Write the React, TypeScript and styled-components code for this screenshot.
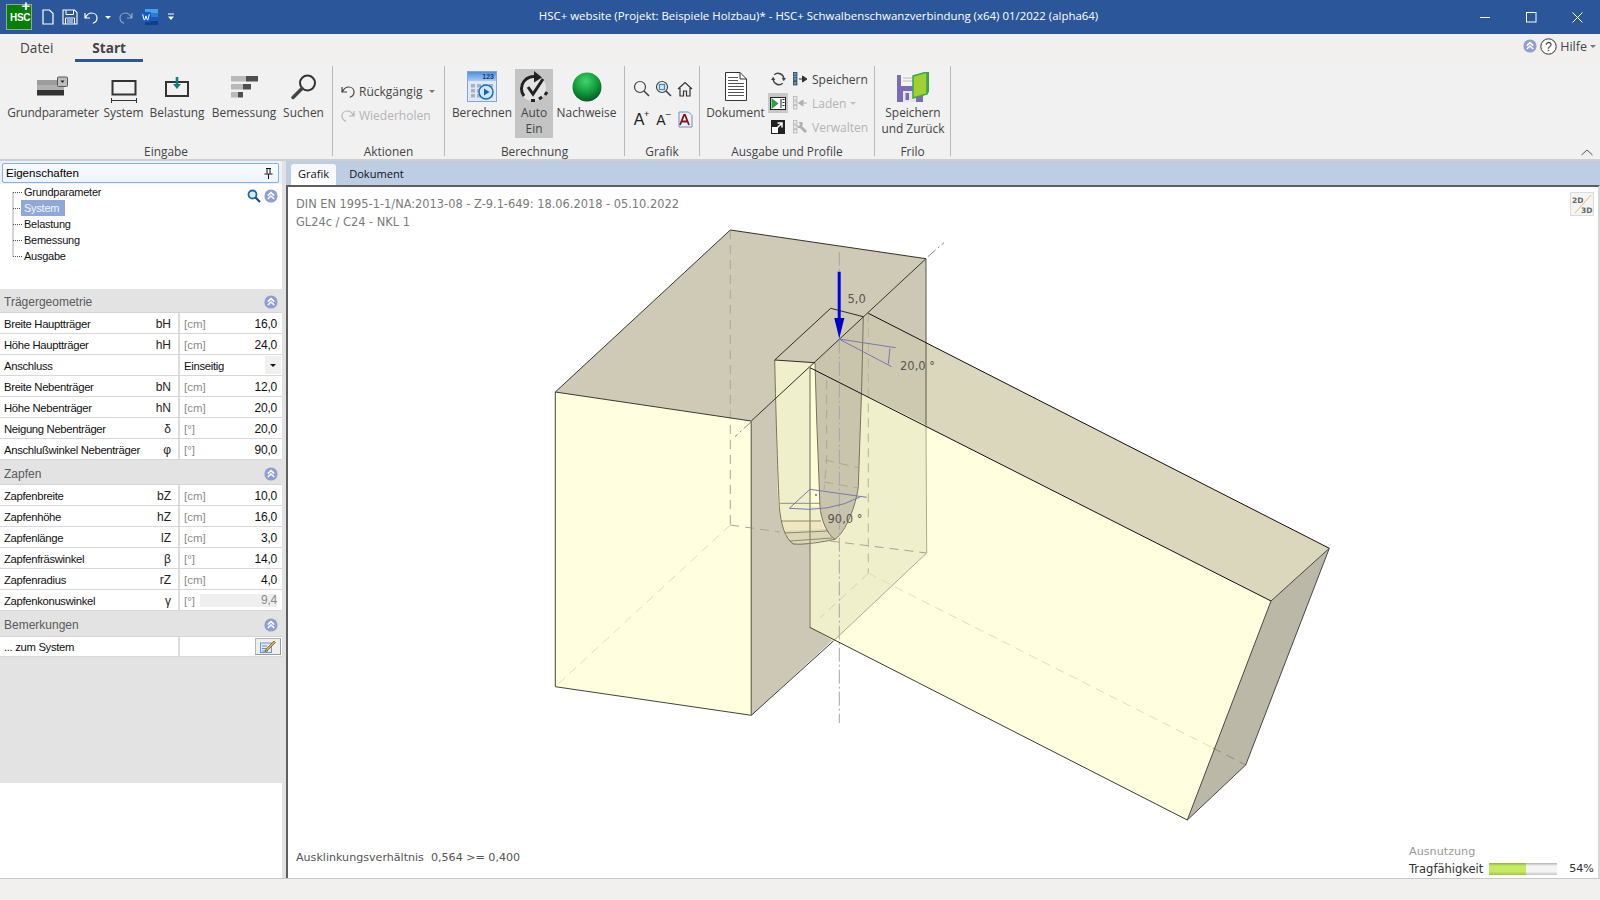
import React from "react";
import styled, { createGlobalStyle } from "styled-components";

const Global = createGlobalStyle`
  html, body { margin: 0; padding: 0; width: 1600px; height: 900px; overflow: hidden; background: #f1f0ef; }
  #root { width: 1600px; height: 900px; }
  * { box-sizing: border-box; }
`;
const UI = `"Open Sans", "Noto Sans", sans-serif`;
const GRID = `"Liberation Sans", Arial, sans-serif`;

const Shell = styled.div`
  width: 1600px; height: 900px; display: flex; flex-direction: column; font-family: ${UI}; color: #222;
`;
const TitleBar = styled.div`
  height: 34px; flex: none; background: #2b579a; display: flex; align-items: center; position: relative; color: #fff;
`;
const Logo = styled.div`
  width: 26px; height: 26px; margin-left: 6px; background: #048004; border: 1px solid #9aa39a; color: #fff;
  font: bold 10px/26px "Liberation Sans", sans-serif; position: relative; text-align: left; padding-left: 3px; letter-spacing: -0.3px;
`;
const LogoPlus = styled.span`
  position: absolute; right: 1px; top: -7px; font: bold 15px/15px "Liberation Sans", sans-serif;
`;
const QuickBar = styled.div`
  display: flex; align-items: center; margin-left: 6px; height: 34px;
`;
const QuickSlot = styled.div<{ $w: number }>`
  width: ${p => p.$w}px; height: 34px; display: flex; align-items: center; justify-content: center;
`;
const Title = styled.div`
  position: absolute; left: 0; right: 0; top: 0; height: 34px; padding-left: 37px; text-align: center;
  font: 11.45px/32px ${UI}; color: #fff; pointer-events: none;
`;
const WinButtons = styled.div`
  margin-left: auto; display: flex; height: 34px; align-items: center;
`;
const WinButton = styled.div`
  width: 46px; height: 34px; display: flex; align-items: center; justify-content: center;
`;
const MenuRow = styled.div`
  height: 28px; flex: none; background: #f1f0ef; display: flex; position: relative; align-items: flex-start; padding-left: 3px;
`;
const MenuTab = styled.div<{ $active?: boolean }>`
  height: 28px; padding: 0 17px; font-family: ${UI}; font-size: 13.6px; line-height: 27px;
  color: #444; font-weight: ${p => (p.$active ? 700 : 400)};
  border-bottom: 3px solid ${p => (p.$active ? "#2b579a" : "transparent")};
  margin-right: ${p => (p.$active ? 0 : 5)}px; min-width: ${p => (p.$active ? 67 : 0)}px; text-align: center;
`;
const HelpArea = styled.div`
  margin-left: auto; display: flex; align-items: center; height: 24px; padding-right: 4px; gap: 3px;
  font-size: 12.5px; color: #444;
`;
const Ribbon = styled.div`
  height: 99px; flex: none; background: #f1f1f1; border-bottom: 2px solid #cfcfcf; display: flex; position: relative;
`;
const Group = styled.div<{ $w: number }>`
  width: ${p => p.$w}px; height: 90px; margin-top: 4px; flex: none; border-right: 1px solid #b8b8b8;
  display: flex; flex-direction: column; position: relative;
`;
const GroupBody = styled.div<{ $pad?: number; $gap?: number }>`
  flex: 1; display: flex; padding-left: ${p => p.$pad ?? 0}px; gap: ${p => p.$gap ?? 0}px; min-height: 0;
`;
const GroupLabel = styled.div`
  height: 17px; flex: none; text-align: center; font-size: 11.9px; line-height: 15px; color: #444; margin-bottom: -5px;
`;
const BigButton = styled.div<{ $active?: boolean; $w?: number }>`
  margin-top: 3px; height: 69px; display: flex; flex-direction: column; align-items: center; flex: none;
  width: ${p => (p.$w ? `${p.$w}px` : "auto")};
  background: ${p => (p.$active ? "#c4c4c4" : "transparent")};
`;
const BigIcon = styled.div`
  height: 35px; display: flex; align-items: center; justify-content: center; flex: none;
`;
const BigLabel = styled.div`
  font-size: 11.9px; line-height: 16px; color: #444; text-align: center; white-space: nowrap;
`;
const TightLabel = styled(BigLabel)`
  letter-spacing: -0.18px;
`;
const RowStack = styled.div<{ $top: number; $gap: number }>`
  display: flex; flex-direction: column; padding-top: ${p => p.$top}px; gap: ${p => p.$gap}px;
`;
const SmallRow = styled.div<{ $disabled?: boolean }>`
  height: 24px; display: flex; align-items: center; gap: 4px; font-size: 12px; white-space: nowrap;
  color: ${p => (p.$disabled ? "#b4b4b4" : "#444")};
`;
const Caret = styled.span<{ $c?: string }>`
  width: 0; height: 0; border-left: 3px solid transparent; border-right: 3px solid transparent; flex: none;
  border-top: 3px solid ${p => p.$c ?? "#777"}; display: inline-block;
`;
const SpacedCaret = styled(Caret)`
  margin-left: 3px;
`;
const IconGrid = styled.div`
  display: grid; grid-template-columns: repeat(3, 22px); grid-auto-rows: 31px; padding: 7px 0 0 5px;
`;
const IconCell = styled.div<{ $active?: boolean }>`
  display: flex; align-items: center; justify-content: center; background: ${p => (p.$active ? "#c8c8c8" : "transparent")};
`;
const OutputCol = styled.div`
  width: 20px; display: flex; flex-direction: column; padding-top: 1px; margin: 0 5px 0 4px;
`;
const OutputCell = styled(IconCell)`
  height: 24px; background-clip: content-box; padding: 2px 0;
`;
const Main = styled.div`
  flex: 1; display: flex; min-height: 0;
`;
const Side = styled.div`
  width: 282px; flex: none; background: #fff; display: flex; flex-direction: column; font-family: ${GRID};
`;
const Splitter = styled.div`
  width: 4px; flex: none; background: #e2e2e2;
`;
const PanelHead = styled.div`
  height: 23px; flex: none; padding: 2px 3px 1px 2px; background: #eaf1fa;
`;
const PanelHeadBox = styled.div`
  height: 20px; border: 1px solid #86b0e6; border-radius: 2px; background: linear-gradient(#f8fbff, #eef5fe);
  display: flex; align-items: center; justify-content: space-between; padding: 0 5px 0 3px; font-size: 11.5px; color: #000;
`;
const TreeBox = styled.div`
  height: 105px; flex: none; position: relative;
`;
const TreeItem = styled.div<{ $sel?: boolean }>`
  height: 16px; font-size: 11px; letter-spacing: -0.25px; line-height: 16px; width: max-content; color: ${p => (p.$sel ? "#f2f5fc" : "#111")};
  margin-left: ${p => (p.$sel ? 21 : 24)}px; padding: 0 ${p => (p.$sel ? 6 : 0)}px 0 ${p => (p.$sel ? 3 : 0)}px;
  background: ${p => (p.$sel ? "#8fa8d8" : "transparent")};
`;
const TreeLines = styled.svg`
  position: absolute; left: 0; top: 0;
`;
const TreeTools = styled.div`
  position: absolute; right: 4px; top: 5px; display: flex; gap: 3px; align-items: center;
`;
const SectionHead = styled.div<{ $h: number; $pt?: number }>`
  height: ${p => p.$h}px; flex: none; background: #e3e3e3; border-bottom: 1px solid #d4d4d4; display: flex; align-items: center;
  justify-content: space-between; padding: ${p => p.$pt ?? 2}px 4px 0 4px; font-size: 12px; color: #5a5a5a;
`;
const Row = styled.div<{ $h?: number }>`
  height: ${p => p.$h ?? 21}px; flex: none; display: grid; grid-template-columns: 180px 1fr; border-bottom: 1px solid #d8d8d8; background: #fff;
  font-size: 12px; color: #111;
`;
const RowLeft = styled.div`
  border-right: 2px solid #dcdcdc; display: flex; align-items: center; justify-content: space-between; padding: 1px 7px 0 4px;
  font-size: 11.3px; letter-spacing: -0.33px;
`;
const Sym = styled.span`
  letter-spacing: 0; color: #222; font-size: 12px;
`;
const RowRight = styled.div`
  display: flex; align-items: center; justify-content: space-between; padding: 1px 5px 0 4px; position: relative;
`;
const Unit = styled.span`
  color: #8c8c8c; font-size: 11.5px; flex: none;
`;
const Choice = styled.span`
  font-size: 11.3px; letter-spacing: -0.3px;
`;
const Value = styled.span<{ $ro?: boolean }>`
  text-align: right; flex: ${p => (p.$ro ? 1 : "none")}; margin-left: ${p => (p.$ro ? 5 : 0)}px;
  background: ${p => (p.$ro ? "#efefef" : "transparent")}; color: ${p => (p.$ro ? "#8a8a8a" : "#111")};
  line-height: ${p => (p.$ro ? 13 : 16)}px; font-size: 12px; letter-spacing: -0.2px;
`;
const DropButton = styled.div`
  position: absolute; right: 1px; top: 1px; bottom: 1px; width: 16px; background: #f0f0f0; display: flex; align-items: center; justify-content: center;
`;
const EditButton = styled.div`
  position: absolute; right: 1px; top: 1px; bottom: 1px; width: 26px; background: #eee; border: 1px solid #b5b5b5; border-right-color: #999; border-bottom-color: #999;
  display: flex; align-items: center; justify-content: center;
`;
const GreyFill = styled.div`
  height: 126px; flex: none; background: #e3e3e3;
`;
const Work = styled.div`
  flex: 1; display: flex; flex-direction: column; min-width: 0;
`;
const TabBand = styled.div`
  height: 24px; flex: none; background: #bccde4; display: flex; align-items: flex-end; padding-left: 5px; font-family: ${UI};
`;
const DocTab = styled.div<{ $active?: boolean }>`
  height: 21px; padding: 0 ${p => (p.$active ? 7 : 13)}px; font-size: 11.1px; line-height: 20px; color: #111;
  border-radius: 3px 3px 0 0; background: ${p => (p.$active ? "linear-gradient(#f4f7fc, #ffffff)" : "transparent")};
`;
const Canvas = styled.div`
  flex: 1; position: relative; background: #fff; border-top: 2px solid #5f5f5f; border-left: 2px solid #5f5f5f; border-right: 2px solid #d6d6d6;
  font-family: "DejaVu Sans", sans-serif; color: #7a7a7a; min-height: 0;
`;
const Drawing = styled.svg`
  position: absolute; left: 0; top: 0; width: 1310px; height: 691px;
`;
const InfoLines = styled.div`
  position: absolute; left: 8px; top: 8px; font-size: 11.4px; line-height: 18px;
`;
const ViewSwitch = styled.div`
  position: absolute; right: 4px; top: 5px; width: 24px; height: 24px; border: 1px solid #dcdcdc; background: #f4f4f4;
`;
const CanvasFoot = styled.div`
  position: absolute; left: 8px; bottom: 14px; font-size: 11.1px; color: #555; white-space: pre;
`;
const Usage = styled.div`
  position: absolute; right: 4px; bottom: 1px; width: 185px; font-size: 11.2px;
`;
const UsageTitle = styled.div`
  color: #9a9a9a; height: 17px; line-height: 17px;
`;
const UsageRow = styled.div`
  display: flex; align-items: center; color: #333; height: 17px; white-space: nowrap; justify-content: space-between; font-size: 11.5px;
`;
const UsageValue = styled.span`
  font-size: 11.2px;
`;
const Bar = styled.div`
  width: 68px; height: 12px; flex: none; background: linear-gradient(#b5b5b5, #f4f4f4 25%, #f4f4f4 70%, #c8c8c8);
  margin: 0 12px 0 auto; overflow: hidden;
`;
const BarFill = styled.div`
  height: 100%; background: linear-gradient(#93ad4f, #c3ec5f 25%, #c3ec5f 70%, #a3c04f);
`;
const StatusBar = styled.div`
  height: 22px; flex: none; background: #f1f0ef; border-top: 1px solid #c8c8c8;
`;
const Collapse = styled.svg`
  position: absolute; right: 7px; bottom: 3px;
`;

/* ---------- Icons ---------- */
const Chevrons = ({ s = 14 }: { s?: number }) => (
  <svg width={s} height={s} viewBox="0 0 14 14">
    <circle cx="7" cy="7" r="6.6" fill="#8f9fd6" />
    <path d="M3.8 6.6 7 3.6l3.2 3M3.8 10 7 7l3.2 3" fill="none" stroke="#fff" strokeWidth="1.5" />
  </svg>
);
const NewIcon = () => (
  <svg width="12" height="16" viewBox="0 0 12 16"><path d="M1 1h6.5L11 4.5V15H1z" fill="none" stroke="#fff" strokeWidth="1.2" /></svg>
);
const SaveIcon = () => (
  <svg width="16" height="16" viewBox="0 0 16 16">
    <path d="M1 1h11.5L15 3.5V15H1z" fill="none" stroke="#fff" strokeWidth="1.1" />
    <path d="M4 1v4.5h7.5V1M3.5 15V9h9v6M5 11h6M5 13h6" fill="none" stroke="#fff" strokeWidth="1" />
  </svg>
);
const UndoIcon = ({ c = "#fff", w = 14 }: { c?: string; w?: number }) => (
  <svg width={w} height={w} viewBox="0 0 14 14">
    <path d="M1 3v5h5M1.4 7.6C3 4.5 5 3 7.6 3 10.7 3 13 5.2 13 8c0 2.5-1.6 4.5-4.2 5.3" fill="none" stroke={c} strokeWidth="1.2" />
  </svg>
);
const RedoIcon = ({ c = "#8ea4c8", w = 14 }: { c?: string; w?: number }) => (
  <svg width={w} height={w} viewBox="0 0 14 14">
    <g transform="matrix(-1 0 0 1 14 0)">
      <path d="M1 3v5h5M1.4 7.6C3 4.5 5 3 7.6 3 10.7 3 13 5.2 13 8c0 2.5-1.6 4.5-4.2 5.3" fill="none" stroke={c} strokeWidth="1.2" />
    </g>
  </svg>
);
const WordIcon = () => (
  <svg width="17" height="16" viewBox="0 0 17 16">
    <rect x="4" y="0" width="13" height="16" rx="1" fill="#2b7cd3" />
    <rect x="4" y="0" width="13" height="4" fill="#41a5ee" />
    <rect x="4" y="8" width="13" height="4" fill="#185abd" />
    <rect x="4" y="12" width="13" height="4" fill="#103f91" />
    <rect x="0" y="3" width="10" height="10" rx="1" fill="#185abd" />
    <path d="M1.7 5.3l1.3 5.4h.8l1.2-3.8 1.2 3.8h.8l1.3-5.4" fill="none" stroke="#fff" strokeWidth="1" />
  </svg>
);
const Customize = () => (
  <svg width="8" height="8" viewBox="0 0 8 8"><path d="M1 1h6" stroke="#fff" strokeWidth="1" /><path d="M1 3.500h6L4 7z" fill="#fff" /></svg>
);
const GrundIcon = () => (
  <svg width="32" height="22" viewBox="0 0 32 22">
    <rect x="0" y="4" width="27" height="5" fill="#9c9c9c" />
    <rect x="0" y="9" width="27" height="5" fill="#b0b0b0" />
    <rect x="0" y="14" width="27" height="5.500" fill="#333" />
    <rect x="20.500" y="1" width="10" height="9.500" rx="1" fill="#bdbdbd" stroke="#555" />
    <path d="M23.500 4.500h4l-2 2.500z" fill="#222" />
  </svg>
);
const SystemIcon = () => (
  <svg width="28" height="34" viewBox="0 0 28 34">
    <rect x="2.500" y="11" width="23" height="13.500" fill="none" stroke="#333" strokeWidth="2" />
    <path d="M1 30.500h26M1.500 28v5M26.500 28v5" stroke="#333" strokeWidth="1" fill="none" />
  </svg>
);
const LoadIcon = () => (
  <svg width="26" height="22" viewBox="0 0 26 22">
    <rect x="2" y="6" width="22" height="14" fill="none" stroke="#333" strokeWidth="2" />
    <path d="M11.700 1h2.600v7H17l-4 5-4-5h2.700z" fill="#0e8079" />
  </svg>
);
const DesignIcon = () => (
  <svg width="29" height="24" viewBox="0 0 29 24">
    <rect x="1" y="1" width="15" height="5.500" fill="#b9b9b9" /><rect x="16" y="1" width="12" height="5.500" fill="#4f4f4f" />
    <rect x="1" y="9" width="12" height="5.500" fill="#b9b9b9" /><rect x="13" y="9" width="8" height="5.500" fill="#4f4f4f" />
    <rect x="1" y="17" width="7" height="5.500" fill="#b9b9b9" /><rect x="8" y="17" width="5" height="5.500" fill="#4f4f4f" />
  </svg>
);
const SearchBig = () => (
  <svg width="28" height="28" viewBox="0 0 28 28">
    <circle cx="17.500" cy="10" r="7.500" fill="none" stroke="#333" strokeWidth="2" />
    <path d="M12 15.500 3 24.500" stroke="#444" strokeWidth="3.500" strokeLinecap="round" />
  </svg>
);
const CalcIcon = () => (
  <svg width="30" height="31" viewBox="0 0 30 31">
    <defs><linearGradient id="calcHead" x1="0" y1="0" x2="0" y2="1"><stop offset="0" stopColor="#4f8fe0" /><stop offset="1" stopColor="#a8cbf2" /></linearGradient></defs>
    <rect x="0.500" y="0.500" width="29" height="30" fill="#dfe8f5" stroke="#7ea6dc" />
    <rect x="1" y="1" width="28" height="9" fill="url(#calcHead)" />
    <text x="27" y="8" textAnchor="end" fontFamily="Liberation Sans" fontSize="7" fontWeight="700" fill="#173a70">123</text>
    {[4, 10, 16, 22].map(x => [13, 18, 23].map(y => <rect key={`${x}-${y}`} x={x} y={y} width="4" height="3.500" fill="#a9b3bf" />))}
    <circle cx="19" cy="21" r="7" fill="#cfe6fa" stroke="#1c6fb5" strokeWidth="1.500" />
    <path d="M17 17.500v7l5.500-3.500z" fill="#1563a8" />
  </svg>
);
const AutoIcon = () => (
  <svg width="30" height="33" viewBox="0 0 30 33">
    <circle cx="14" cy="18" r="13" fill="#efefef" opacity="0.75" />
    <path d="M19 7.500A12 12 0 0 0 5 26" fill="none" stroke="#222" strokeWidth="3" />
    <path d="M15 1l8 6.500-8 5z" fill="#222" />
    <path d="M9 17l5 7L24 9" fill="none" stroke="#222" strokeWidth="3" />
    <path d="M12 30.500h4M20 29l3-2M26 25l2-3" stroke="#222" strokeWidth="3" />
  </svg>
);
const BallIcon = () => (
  <svg width="30" height="30" viewBox="0 0 30 30">
    <defs>
      <radialGradient id="ball" cx="0.450" cy="0.300" r="0.750">
        <stop offset="0" stopColor="#43d46a" /><stop offset="0.550" stopColor="#0f9a3c" /><stop offset="1" stopColor="#064f20" />
      </radialGradient>
    </defs>
    <circle cx="15" cy="15" r="14.500" fill="url(#ball)" />
  </svg>
);
const Lens = ({ inner }: { inner?: boolean }) => (
  <svg width="17" height="17" viewBox="0 0 17 17">
    <circle cx="7" cy="7" r="5.500" fill="none" stroke="#444" strokeWidth="1.200" />
    <path d="M11 11l5 5" stroke="#444" strokeWidth="1.600" />
    {inner && <rect x="4.500" y="4.500" width="5" height="5" fill="none" stroke="#2f8fd8" strokeWidth="1.300" />}
  </svg>
);
const HomeIcon = () => (
  <svg width="16" height="16" viewBox="0 0 16 16">
    <path d="M1 8l7-6.500L15 8M3 7v8h3.500v-5h3v5H13V7" fill="none" stroke="#333" strokeWidth="1.200" />
  </svg>
);
const FontIconText = styled.span<{ $s: number }>`
  font: ${p => p.$s}px/16px "Liberation Sans", sans-serif; color: #222; position: relative; padding-right: 4px;
`;
const FontSup = styled.span`
  position: absolute; right: -1px; top: -2px; font-size: 9px; line-height: 9px;
`;
const FontAIcon = () => (
  <svg width="15" height="17" viewBox="0 0 15 17">
    <path d="M1 1h9.500L14 4.500V16H1z" fill="#eaf1fb" stroke="#6f8fc0" strokeWidth="1" />
    <path d="M2 14 6 4h1l4 10M4 10.500h5.500" fill="none" stroke="#8c1414" strokeWidth="1.800" />
  </svg>
);
const DocIcon = () => (
  <svg width="22" height="29" viewBox="0 0 22 29">
    <path d="M0.500 0.500H15L21.500 7V28.500H0.500z" fill="#fff" stroke="#333" />
    <path d="M15 0.500V7H21.500" fill="none" stroke="#333" />
    {[5, 8, 11, 14, 17, 20, 23].map(y => <path key={y} d={`M3 ${y}.5h${y < 9 ? 10 : 16}`} stroke="#555" strokeWidth="1" />)}
  </svg>
);
const RefreshIcon = () => (
  <svg width="15" height="16" viewBox="0 0 14 15">
    <path d="M3 3.500A5.500 5.500 0 0 1 12 7M11 11.500A5.500 5.500 0 0 1 2 8" fill="none" stroke="#444" strokeWidth="1.300" />
    <path d="M10 6.500h4L12 9.500zM0 8.500h4L2 5.500z" fill="#444" />
  </svg>
);
const FilmIcon = () => (
  <svg width="16" height="13" viewBox="0 0 16 13">
    <rect x="0.500" y="0.500" width="15" height="12" fill="#fff" stroke="#222" />
    <path d="M1.500 1v11l7-5.500z" fill="#2e9e45" />
    <path d="M11 2v9" stroke="#222" /><path d="M12.500 2.500h2M12.500 5.500h2M12.500 8.500h2" stroke="#222" />
  </svg>
);
const ExpandIcon = () => (
  <svg width="14" height="14" viewBox="0 0 14 14">
    <rect width="14" height="14" fill="#222" />
    <rect x="1" y="7" width="6" height="6" fill="#fff" />
    <path d="M6 8l5-5M6.500 3H11v4.500" fill="none" stroke="#fff" strokeWidth="1.500" />
  </svg>
);
const ListArrow = ({ dir, c, b }: { dir: "r" | "l" | "w"; c: string; b: string }) => (
  <svg width="15" height="14" viewBox="0 0 15 14">
    {[0.5, 5, 9.5].map(y => <rect key={y} x="0.500" y={y} width="3.500" height="3.500" fill={b} stroke={c} strokeWidth="0.700" />)}
    {dir === "r" && <path d="M6 7h5M9.500 4l4.500 3-4.500 3z" stroke={c} fill={c} />}
    {dir === "l" && <path d="M9 7h5M10 4L5.500 7l4.500 3z" stroke={c} fill={c} />}
    {dir === "w" && <path d="M6 2l3 0 1 2-1 2 5 5-2 2-5-5-2 0-1-3 2 1 1-1z" fill={c} />}
  </svg>
);
const SaveBack = () => (
  <svg width="33" height="30" viewBox="0 0 33 30">
    <path d="M0 3h26v27H0z" fill="#7b6bb4" />
    <rect x="4" y="3" width="16" height="11" fill="#f4f4f4" /><path d="M6 6h12M6 9h12" stroke="#bbb" />
    <rect x="6" y="19" width="13" height="11" fill="#e6e6e6" /><rect x="8.500" y="21" width="3.500" height="7" fill="#7b6bb4" />
    <path d="M16 4L30 0v22l-14 4z" fill="#a4cf34" stroke="#33a94b" strokeWidth="1.500" />
    <path d="M30 0h2v20l-2 2z" fill="#33a94b" />
  </svg>
);
const HelpIcon = () => (
  <svg width="17" height="17" viewBox="0 0 17 17">
    <circle cx="8.500" cy="8.500" r="7.700" fill="#fff" stroke="#333" strokeWidth="1" />
    <text x="8.500" y="12.600" textAnchor="middle" fontFamily="Liberation Sans" fontSize="12" fill="#333">?</text>
  </svg>
);
const PinIcon = () => (
  <svg width="9" height="11" viewBox="0 0 9 11"><path d="M2 .5h5M3 .5v5M6 .5v5M.5 6h8M4.500 6v5" stroke="#111" fill="none" strokeWidth="1" /></svg>
);
const TreeSearch = () => (
  <svg width="14" height="14" viewBox="0 0 14 14">
    <circle cx="5.500" cy="5.500" r="4" fill="#d7ecfb" stroke="#1c6aa8" strokeWidth="1.800" />
    <path d="M8.500 8.500l4.500 4.500" stroke="#1b4e86" strokeWidth="2.200" />
  </svg>
);
const EditIcon = () => (
  <svg width="16" height="13" viewBox="0 0 16 13">
    <rect x="0.500" y="3" width="11" height="9.500" fill="#dfeaf7" stroke="#6f95c5" />
    <path d="M2 6h5M2 8.500h4M2 11h6" stroke="#5d8fd0" />
    <path d="M6 9l8-8 1.500 1.500-8 8-2.500 1z" fill="#e0a63a" stroke="#5b4a1e" strokeWidth="0.600" />
  </svg>
);

/* ---------- Drawing ---------- */
const dashFar = "9 6";
const JointDrawing = () => (
  <Drawing viewBox="288 187 1310 691">
    <defs>
      <linearGradient id="head" x1="0" y1="0" x2="1" y2="0">
        <stop offset="0" stopColor="#00008a" /><stop offset="0.500" stopColor="#0000e6" /><stop offset="1" stopColor="#000090" />
      </linearGradient>
    </defs>
    <polygon points="555.300,392 751.300,421 926,258.700 730.300,230" fill="#cfcab5" />
    <polygon points="555.300,392 751.300,421 751.300,715.300 555.300,686.700" fill="#ffffe0" />
    <polygon points="751.300,421 926,258.700 926.700,553 751.300,715.300" fill="#cdc8b6" />
    <polygon points="868.300,313.300 1329.300,548.300 1271,601 810,367.700" fill="#dbd7bd" />
    <polygon points="810,367.700 1271,601 1187.300,820 809.700,627.300" fill="#ffffe0" />
    <polygon points="1271,601 1329.300,548.300 1245.700,765 1187.300,820" fill="#bcb8a8" />
    <polygon points="868.300,313.300 926,341.700 926,425 810,367.700" fill="#cdc9b0" />
    <polygon points="810,367.700 926,425 926.700,553 833.400,641 809.700,627.300" fill="#efefcc" />
    <path d="M774.700 360 L815 362.700 L810 367.700 L810 538 L800 544 C791 543 785 535 782 525 C779 515 778 505 777.500 490 Z" fill="#efefcc" />
    <path d="M810 367.700 L815 362.700 L816.700 420 L820 506.700 C821 520 828 534 835 539.300 L810 541 Z" fill="#fdfdd8" />
    <path d="M815 362.700 L863.300 316.700 L861.700 386.700 L858.300 486.700 C856 505 846 530 835 539.300 C826 534 821 520 820 506.700 L816.700 420 Z" fill="#c9c5ad" />
    <path d="M780 505 L820 506.500 L822 520 L783 523 Z" fill="#efefcc" />
    <path d="M781 521 L821 520 L826 532 L786 536 Z" fill="#f0e6c0" />
    <path d="M784 531 L826 529 L835 539.300 L800 544 C794 543 788 538 784 531 Z" fill="#dbd6b6" />
    <g fill="none" stroke="#77745a" strokeWidth="1">
      <path d="M780 503.300H820M781.500 521H821M785 533L828 531M790 541L832 538" strokeWidth="0.800" />
      <path d="M774.700 360 C776 420 778 480 779.300 506.700 C781 525 785 538 793 544 C805 545 822 542 835 539.300 C846 532 856 505 858.300 486.700 L861.700 386.700 L863.300 316.700" />
      <path d="M815 362.700 L816.700 420 L820 506.700 C821 520 827 534 835 539.300" />
    </g>
    <g fill="none" strokeWidth="1" strokeDasharray={dashFar}>
      <path d="M730.300 230V525" stroke="#aaa79a" />
      <path d="M730.300 525L555.300 686.700" stroke="#dedec4" />
      <path d="M730.300 525L780 532M830 541L926.700 553" stroke="#a8a592" />
      <path d="M868.300 313.300V573.300" stroke="#b7b498" />
      <path d="M868.300 573.300L820 618" stroke="#d2d2b2" />
      <path d="M868.300 573.300L1213 748" stroke="#ddddc0" />
      <path d="M1213 748L1245.700 765" stroke="#8f8d80" />
      <path d="M826.700 380V460L824 490M825 460L860 468M824 482L858 488" stroke="#aaa892" />
    </g>
    <g fill="none" stroke="#a4a4a4" strokeWidth="1" strokeDasharray="14 3 2 3">
      <path d="M839.300 251.700V723" />
    </g>
    <g fill="none" stroke="#888" strokeWidth="1" strokeDasharray="10 3 2 3">
      <path d="M928 256.500L944 242.700" />
      <path d="M751 422L735 436.700" />
    </g>
    <g fill="none" strokeWidth="1">
      <path d="M730.300 230L926 258.700" stroke="#33312a" />
      <path d="M730.300 230L555.300 392L751.300 421" stroke="#3a3830" />
      <path d="M751.300 421L926 258.700" stroke="#33312a" />
      <path d="M555.300 392V686.700L751.300 715.300" stroke="#44433a" />
      <path d="M751.300 421V715.300" stroke="#7d7a63" strokeWidth="1.400" />
      <path d="M751.300 715.300L833.400 641" stroke="#3a3830" />
      <path d="M926 258.700V425" stroke="#5c5945" />
      <path d="M926 425L926.700 553L833.400 641" stroke="#aeab8c" />
      <path d="M810 367.700V627.300" stroke="#8b8972" strokeWidth="1.300" />
      <path d="M868.300 313.300L1329.300 548.300" stroke="#111" />
      <path d="M810 367.700L1271 601" stroke="#111" />
      <path d="M809.700 627.300L1187.300 820" stroke="#3c3b30" />
      <path d="M1271 601L1329.300 548.300L1245.700 765L1187.300 820L1271 601" stroke="#4a4940" />
      <path d="M774.700 360L830.700 308.300L863.300 316.700M774.700 360L815 362.700" stroke="#2f2d26" />
    </g>
    <g fill="none" stroke="#7878ae" strokeWidth="1">
      <path d="M839 339L895.700 347.700M839 339L891.700 366.700M890 348.300L888.300 364" />
      <path d="M789.300 508.300L810 489.300L866.700 497.300M789.300 508.300Q830 513 860 497" />
    </g>
    <circle cx="816" cy="495" r="1" fill="#6666aa" />
    <rect x="837.700" y="271.700" width="3" height="47" fill="#0000e6" />
    <polygon points="834.300,318 844.300,318 839.300,338.500" fill="url(#head)" />
    <g fontFamily="DejaVu Sans, sans-serif" fontSize="11.500" fill="#555">
      <text x="847.500" y="303">5,0</text>
      <text x="900" y="370">20,0 °</text>
      <text x="827.500" y="523">90,0 °</text>
    </g>
  </Drawing>
);

const SwitchIcon = () => (
  <svg width="22" height="22" viewBox="0 0 22 22">
    <path d="M20 2L4 20" stroke="#f2b56a" strokeWidth="1" />
    <text x="1" y="10" fontFamily="DejaVu Sans" fontWeight="700" fontSize="7.500" fill="#666">2D</text>
    <text x="10" y="20" fontFamily="DejaVu Sans" fontWeight="700" fontSize="7.500" fill="#666">3D</text>
  </svg>
);

type RowData = { label: string; sym: string; unit: string; value: string; ro?: boolean };
const geom: RowData[] = [
  { label: "Breite Hauptträger", sym: "bH", unit: "[cm]", value: "16,0" },
  { label: "Höhe Hauptträger", sym: "hH", unit: "[cm]", value: "24,0" },
];
const geom2: RowData[] = [
  { label: "Breite Nebenträger", sym: "bN", unit: "[cm]", value: "12,0" },
  { label: "Höhe Nebenträger", sym: "hN", unit: "[cm]", value: "20,0" },
  { label: "Neigung Nebenträger", sym: "δ", unit: "[°]", value: "20,0" },
  { label: "Anschlußwinkel Nebenträger", sym: "φ", unit: "[°]", value: "90,0" },
];
const zapfen: RowData[] = [
  { label: "Zapfenbreite", sym: "bZ", unit: "[cm]", value: "10,0" },
  { label: "Zapfenhöhe", sym: "hZ", unit: "[cm]", value: "16,0" },
  { label: "Zapfenlänge", sym: "lZ", unit: "[cm]", value: "3,0" },
  { label: "Zapfenfräswinkel", sym: "β", unit: "[°]", value: "14,0" },
  { label: "Zapfenradius", sym: "rZ", unit: "[cm]", value: "4,0" },
  { label: "Zapfenkonuswinkel", sym: "γ", unit: "[°]", value: "9,4", ro: true },
];
const DataRow = ({ d }: { d: RowData }) => (
  <Row>
    <RowLeft><span>{d.label}</span><Sym>{d.sym}</Sym></RowLeft>
    <RowRight><Unit>{d.unit}</Unit><Value $ro={d.ro}>{d.value}</Value></RowRight>
  </Row>
);

export default function App() {
  return (
    <Shell>
      <Global />
      <TitleBar>
        <Logo>HSC<LogoPlus>+</LogoPlus></Logo>
        <QuickBar>
          <QuickSlot $w={20}><NewIcon /></QuickSlot>
          <QuickSlot $w={23}><SaveIcon /></QuickSlot>
          <QuickSlot $w={20}><UndoIcon /></QuickSlot>
          <QuickSlot $w={14}><Caret $c="#fff" /></QuickSlot>
          <QuickSlot $w={21}><RedoIcon /></QuickSlot>
          <QuickSlot $w={26}><WordIcon /></QuickSlot>
          <QuickSlot $w={17}><Customize /></QuickSlot>
        </QuickBar>
        <Title>HSC+ website (Projekt: Beispiele Holzbau)* - HSC+ Schwalbenschwanzverbindung (x64) 01/2022 (alpha64)</Title>
        <WinButtons>
          <WinButton><svg width="11" height="11" viewBox="0 0 11 11"><path d="M0 5.500h10" stroke="#fff" /></svg></WinButton>
          <WinButton><svg width="11" height="11" viewBox="0 0 11 11"><rect x="0.500" y="0.500" width="9.500" height="9.500" fill="none" stroke="#fff" /></svg></WinButton>
          <WinButton><svg width="11" height="11" viewBox="0 0 11 11"><path d="M.5.500l10 10M10.500.500l-10 10" stroke="#fff" /></svg></WinButton>
        </WinButtons>
      </TitleBar>
      <MenuRow>
        <MenuTab>Datei</MenuTab>
        <MenuTab $active>Start</MenuTab>
        <HelpArea><Chevrons /><HelpIcon /> Hilfe <Caret /></HelpArea>
      </MenuRow>
      <Ribbon>
        <Group $w={333}>
          <GroupBody $pad={5}>
            <BigButton $w={96}><BigIcon><GrundIcon /></BigIcon><TightLabel>Grundparameter</TightLabel></BigButton>
            <BigButton $w={45}><BigIcon><SystemIcon /></BigIcon><BigLabel>System</BigLabel></BigButton>
            <BigButton $w={62}><BigIcon><LoadIcon /></BigIcon><BigLabel>Belastung</BigLabel></BigButton>
            <BigButton $w={72}><BigIcon><DesignIcon /></BigIcon><BigLabel>Bemessung</BigLabel></BigButton>
            <BigButton $w={47}><BigIcon><SearchBig /></BigIcon><BigLabel>Suchen</BigLabel></BigButton>
          </GroupBody>
          <GroupLabel>Eingabe</GroupLabel>
        </Group>
        <Group $w={112}>
          <GroupBody $pad={8}>
            <RowStack $top={13} $gap={0}>
              <SmallRow><UndoIcon c="#444" /> Rückgängig <SpacedCaret /></SmallRow>
              <SmallRow $disabled><RedoIcon c="#b4b4b4" /> Wiederholen</SmallRow>
            </RowStack>
          </GroupBody>
          <GroupLabel>Aktionen</GroupLabel>
        </Group>
        <Group $w={180}>
          <GroupBody $pad={6} $gap={2}>
            <BigButton $w={62}><BigIcon><CalcIcon /></BigIcon><BigLabel>Berechnen</BigLabel></BigButton>
            <BigButton $w={38} $active><BigIcon><AutoIcon /></BigIcon><BigLabel>Auto<br />Ein</BigLabel></BigButton>
            <BigButton $w={63}><BigIcon><BallIcon /></BigIcon><BigLabel>Nachweise</BigLabel></BigButton>
          </GroupBody>
          <GroupLabel>Berechnung</GroupLabel>
        </Group>
        <Group $w={75}>
          <GroupBody>
            <IconGrid>
              <IconCell><Lens /></IconCell>
              <IconCell><Lens inner /></IconCell>
              <IconCell><HomeIcon /></IconCell>
              <IconCell><FontIconText $s={16}>A<FontSup>+</FontSup></FontIconText></IconCell>
              <IconCell><FontIconText $s={14}>A<FontSup>–</FontSup></FontIconText></IconCell>
              <IconCell><FontAIcon /></IconCell>
            </IconGrid>
          </GroupBody>
          <GroupLabel>Grafik</GroupLabel>
        </Group>
        <Group $w={175}>
          <GroupBody $pad={7}>
            <BigButton $w={57}><BigIcon><DocIcon /></BigIcon><BigLabel>Dokument</BigLabel></BigButton>
            <OutputCol>
              <OutputCell><RefreshIcon /></OutputCell>
              <OutputCell $active><FilmIcon /></OutputCell>
              <OutputCell><ExpandIcon /></OutputCell>
            </OutputCol>
            <RowStack $top={1} $gap={0}>
              <SmallRow><ListArrow dir="r" c="#333" b="#3b9ad8" /> Speichern</SmallRow>
              <SmallRow $disabled><ListArrow dir="l" c="#b0b0b0" b="#e6e6e6" /> Laden <Caret $c="#c0c0c0" /></SmallRow>
              <SmallRow $disabled><ListArrow dir="w" c="#b0b0b0" b="#e6e6e6" /> Verwalten</SmallRow>
            </RowStack>
          </GroupBody>
          <GroupLabel>Ausgabe und Profile</GroupLabel>
        </Group>
        <Group $w={76}>
          <GroupBody>
            <BigButton $w={76}><BigIcon><SaveBack /></BigIcon><BigLabel>Speichern<br />und Zurück</BigLabel></BigButton>
          </GroupBody>
          <GroupLabel>Frilo</GroupLabel>
        </Group>
        <Collapse width="12" height="7" viewBox="0 0 12 7">
          <path d="M.5 6L6 1l5.500 5" fill="none" stroke="#555" />
        </Collapse>
      </Ribbon>
      <Main>
        <Side>
          <PanelHead><PanelHeadBox>Eigenschaften <PinIcon /></PanelHeadBox></PanelHead>
          <TreeBox>
            <TreeLines width="24" height="80" viewBox="0 0 24 80">
              <path d="M13 8.500V73M13 8.500h9M13 24.500h8M13 40.500h9M13 56.500h9M13 72.500h9" stroke="#555" strokeDasharray="1 1" fill="none" />
            </TreeLines>
            <TreeItem>Grundparameter</TreeItem>
            <TreeItem $sel>System</TreeItem>
            <TreeItem>Belastung</TreeItem>
            <TreeItem>Bemessung</TreeItem>
            <TreeItem>Ausgabe</TreeItem>
            <TreeTools><TreeSearch /><Chevrons /></TreeTools>
          </TreeBox>
          <SectionHead $h={24}>Trägergeometrie <Chevrons /></SectionHead>
          {geom.map(d => <DataRow key={d.label} d={d} />)}
          <Row>
            <RowLeft><span>Anschluss</span></RowLeft>
            <RowRight>
              <Choice>Einseitig</Choice>
              <DropButton><Caret $c="#111" /></DropButton>
            </RowRight>
          </Row>
          {geom2.map(d => <DataRow key={d.label} d={d} />)}
          <SectionHead $h={25} $pt={3}>Zapfen <Chevrons /></SectionHead>
          {zapfen.map(d => <DataRow key={d.label} d={d} />)}
          <SectionHead $h={26}>Bemerkungen <Chevrons /></SectionHead>
          <Row $h={20}>
            <RowLeft><span>... zum System</span></RowLeft>
            <RowRight><EditButton><EditIcon /></EditButton></RowRight>
          </Row>
          <GreyFill />
        </Side>
        <Splitter />
        <Work>
          <TabBand>
            <DocTab $active>Grafik</DocTab>
            <DocTab>Dokument</DocTab>
          </TabBand>
          <Canvas>
            <JointDrawing />
            <InfoLines>
              DIN EN 1995-1-1/NA:2013-08 - Z-9.1-649: 18.06.2018 - 05.10.2022<br />
              GL24c / C24 - NKL 1
            </InfoLines>
            <ViewSwitch><SwitchIcon /></ViewSwitch>
            <CanvasFoot>{"Ausklinkungsverhältnis  0,564 >= 0,400"}</CanvasFoot>
            <Usage>
              <UsageTitle>Ausnutzung</UsageTitle>
              <UsageRow>
                <span>Tragfähigkeit</span>
                <Bar><BarFill style={{ width: "54%" }} /></Bar>
                <UsageValue>54%</UsageValue>
              </UsageRow>
            </Usage>
          </Canvas>
        </Work>
      </Main>
      <StatusBar />
    </Shell>
  );
}
